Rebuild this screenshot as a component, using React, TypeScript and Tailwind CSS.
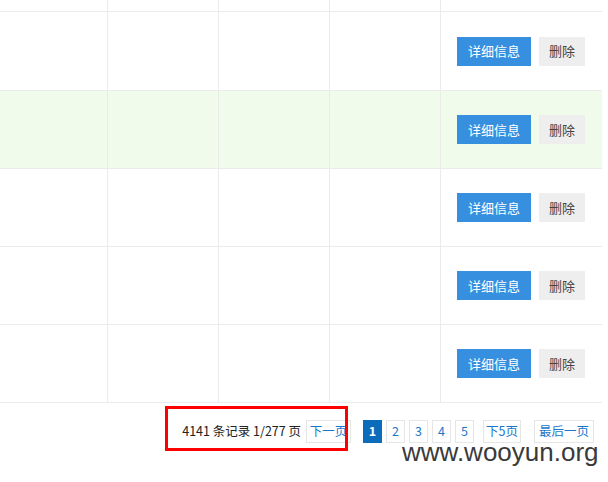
import React from 'react';

const rows = [false, true, false, false, false];

function PageBox({ children, active, w }: { children: React.ReactNode; active?: boolean; w: string }) {
  return (
    <span
      className={`flex h-[23px] items-center justify-center border text-[12.5px] ${w} ${
        active ? 'border-[#0b6cbc] bg-[#0b6cbc] font-bold text-white' : 'border-[#e6e6e6] bg-white text-[#1c77c9]'
      }`}
    >
      {children}
    </span>
  );
}

export default function App() {
  return (
    <div
      className="relative h-[482px] w-[608px] overflow-hidden bg-white text-[13px] text-[#333]"
      style={{ fontFamily: '"Microsoft YaHei", "Noto Sans CJK SC", "Liberation Sans", sans-serif' }}
    >
      <div className="w-[602px]">
        {/* partial top row */}
        <div className="flex h-[12px] border-b border-[#ebebeb]">
          <div className="w-[108px] border-r border-[#ebebeb]" />
          <div className="w-[111px] border-r border-[#ebebeb]" />
          <div className="w-[111px] border-r border-[#ebebeb]" />
          <div className="w-[111px] border-r border-[#ebebeb]" />
          <div className="flex-1" />
        </div>

        {rows.map((hl, i) => (
          <div
            key={i}
            className={`flex border-b border-[#ebebeb] ${i === 0 ? 'h-[79px]' : 'h-[78px]'} ${hl ? 'bg-[#f1fbeb]' : ''}`}
          >
            <div className="w-[108px] border-r border-[#ebebeb]" />
            <div className="w-[111px] border-r border-[#ebebeb]" />
            <div className="w-[111px] border-r border-[#ebebeb]" />
            <div className="w-[111px] border-r border-[#ebebeb]" />
            <div className="flex flex-1 items-center gap-2 pl-[16px]">
              <button className="flex h-[29px] w-[74px] items-center justify-center bg-[#378fe0] text-[13px] text-white">
                详细信息
              </button>
              <button className="flex h-[29px] w-[46px] items-center justify-center bg-[#eeeeee] text-[13px] text-[#444]">
                删除
              </button>
            </div>
          </div>
        ))}

        {/* pagination */}
        <div className="flex items-center justify-end pr-[8px] pt-[17px]">
          <span className="mr-[5px] text-[12.5px] text-[#222]">4141 条记录 1/277 页</span>
          <PageBox w="w-[45px]">下一页</PageBox>
          <div className="ml-[12px] flex items-center gap-[4px]">
            <PageBox active w="w-[19px]">1</PageBox>
            <PageBox w="w-[19px]">2</PageBox>
            <PageBox w="w-[19px]">3</PageBox>
            <PageBox w="w-[19px]">4</PageBox>
            <PageBox w="w-[19px]">5</PageBox>
          </div>
          <div className="ml-[9px]">
            <PageBox w="w-[38px]">下5页</PageBox>
          </div>
          <div className="ml-[13px]">
            <PageBox w="w-[60px]">最后一页</PageBox>
          </div>
        </div>
      </div>

      {/* red highlight box */}
      <div className="absolute left-[165px] top-[406px] h-[45px] w-[183px] border-[3px] border-[#ff0000]" />

      {/* watermark */}
      <div
        className="absolute left-[402px] top-[439px] text-[26px] leading-none text-[#3a3a3a]"
        style={{ fontFamily: '"Liberation Sans", Arial, sans-serif' }}
      >
        www.wooyun.org
      </div>
    </div>
  );
}
